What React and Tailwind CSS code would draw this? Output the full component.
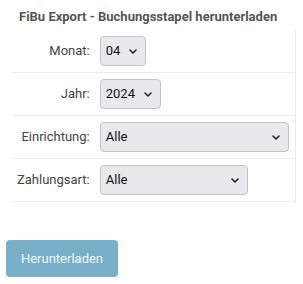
import React from 'react';

const rows = [
  { label: 'Monat:', value: '04', width: 'w-[46px]' },
  { label: 'Jahr:', value: '2024', width: 'w-[61px]' },
  { label: 'Einrichtung:', value: 'Alle', width: 'w-full' },
  { label: 'Zahlungsart:', value: 'Alle', width: 'w-[148px]' },
];

function Chevron() {
  return (
    <svg width="8" height="5" viewBox="0 0 8 5" className="shrink-0">
      <path d="M1 1 L4 4 L7 1" fill="none" stroke="#1f1f1f" strokeWidth="1.5" strokeLinecap="round" strokeLinejoin="round" />
    </svg>
  );
}

function FakeSelect({ value, width }) {
  return (
    <div className={`${width} h-[30px] flex items-center justify-between pl-[5px] pr-[8px] bg-[#e9e9ed] border border-[#c3c3c8] rounded-[4px] text-[#111] text-[13px]`}>
      <span>{value}</span>
      <Chevron />
    </div>
  );
}

export default function App() {
  return (
    <div className="w-[303px] h-[284px] bg-white font-['Roboto',sans-serif] text-[13px] leading-5">
      <h1 className="pt-[7px] pl-[19px] font-bold text-[#555] text-[13px] leading-5">
        FiBu Export - Buchungsstapel herunterladen
      </h1>
      <div className="mt-[3px] ml-3 w-[284px] border-r border-[#ececec] grid grid-cols-[auto_1fr]">
        {rows.map((r) => (
          <React.Fragment key={r.label}>
            <div className="px-[5px] border-b border-[#ececec] flex items-center justify-end text-[#444]">
              {r.label}
            </div>
            <div className="pl-[5px] pr-[6px] py-1.5 border-b border-[#ececec] flex">
              <FakeSelect value={r.value} width={r.width} />
            </div>
          </React.Fragment>
        ))}
      </div>
      <div className="mt-[38px] ml-1.5">
        <button className="w-[112px] h-[37px] rounded-[4px] bg-[#79afc9] text-[#f2f7fa] text-[13px]">
          Herunterladen
        </button>
      </div>
    </div>
  );
}
